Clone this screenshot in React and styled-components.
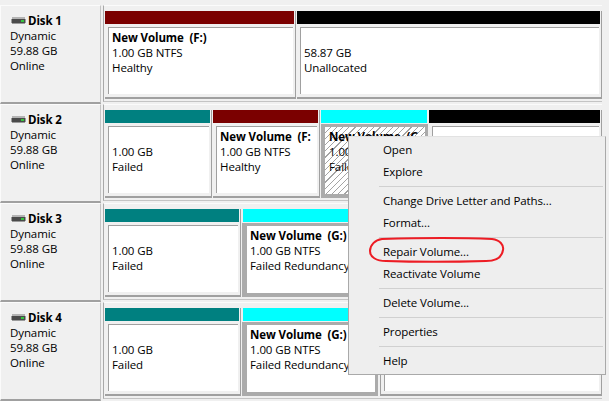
import React from 'react';
import styled, { createGlobalStyle, css } from 'styled-components';

const GlobalStyle = createGlobalStyle`
  html, body {
    margin: 0;
    padding: 0;
    width: 609px;
    height: 401px;
    overflow: hidden;
    background: #f0f0f0;
  }
`;

const Page = styled.div`
  position: relative;
  width: 609px;
  height: 401px;
  padding-top: 5px;
  box-sizing: border-box;
  background: #f0f0f0;
  font-family: 'Open Sans', 'Noto Sans', sans-serif;
  font-size: 11.5px;
  letter-spacing: -0.1px;
  line-height: 15px;
  color: #000;
  overflow: hidden;
`;

const Row = styled.div`
  display: flex;
  height: 99px;
`;

const DiskLabel = styled.div`
  box-sizing: border-box;
  flex: none;
  width: 101px;
  height: 99px;
  margin-right: 2px;
  padding: 7px 0 0 9px;
  border-top: 1px solid #fbfbfb;
  border-left: 1px solid #fbfbfb;
  border-right: 1px solid #c4c4c4;
  border-bottom: 2px solid #a0a0a0;
`;

const DiskTitle = styled.div`
  display: flex;
  align-items: center;
  gap: 2px;
  font-weight: 700;
  margin-left: 1px;
`;

const Track = styled.div`
  flex: none;
  box-sizing: border-box;
  display: flex;
  gap: 1px;
  width: 499px;
  height: 97px;
  padding: 5px 0 0 1px;
  border-top: 1px solid #fbfbfb;
  border-left: 1px solid #a8a8a8;
  border-bottom: 1px solid #c4c4c4;
`;

const Cell = styled.div`
  box-sizing: border-box;
  display: flex;
  flex-direction: column;
  flex: ${(p) => (p.$grow ? '1 1 0' : 'none')};
  width: ${(p) => (p.$width ? `${p.$width}px` : 'auto')};
  height: 88px;
  ${(p) =>
    !p.$selected &&
    css`
      border-right: 1px solid #a0a0a0;
      border-bottom: 2px solid #a0a0a0;
    `}
  ${(p) =>
    p.$framed &&
    css`
      margin-left: 1px;
      border-left: 1px solid #a0a0a0;
    `}
`;

const Bar = styled.div`
  flex: none;
  height: 13px;
  margin-left: ${(p) => p.$lead}px;
  margin-right: 1px;
  background: ${(p) => p.$color};
`;

const Body = styled.div`
  flex: 1;
  min-height: 0;
  display: flex;
  ${(p) =>
    p.$selected
      ? css`
          margin-top: 1px;
          padding: 3px 3px 4px ${4 + p.$lead}px;
          background: #ababab;
        `
      : css`
          padding: 3px 2px 3px 3px;
        `}
`;

const Box = styled.div`
  flex: 1;
  min-width: 0;
  box-sizing: border-box;
  padding: 2px 0 0 ${(p) => (p.$hatch ? 4 : 3)}px;
  white-space: pre;
  overflow: hidden;
  background: ${(p) =>
    p.$hatch
      ? 'repeating-linear-gradient(135deg, #fff 0, #fff 3.6px, #a4a4a4 3.6px, #a4a4a4 4.4px)'
      : '#fff'};
  ${(p) =>
    !p.$plain &&
    css`
      border-top: 1px solid #a0a0a0;
      border-left: 1px solid #a0a0a0;
    `}
`;

const BoxText = styled.div`
  min-height: 15px;
  font-weight: ${(p) => (p.$bold ? 700 : 400)};
`;

const Menu = styled.div`
  position: absolute;
  left: 348px;
  top: 136px;
  box-sizing: border-box;
  width: 258px;
  height: 239px;
  padding: 2px 2px 4px;
  background: #eeeeee;
  border: 1px solid #a9a9a9;
  border-top-color: #e2e2e2;
`;

const MenuItem = styled.div`
  height: 22px;
  padding-left: 32px;
  line-height: 22px;
`;

const MenuRule = styled.div`
  height: 1px;
  margin: 3px 0 3px 28px;
  background: #d0d0d0;
`;

const Oval = styled.svg`
  position: absolute;
  left: 368px;
  top: 237px;
`;

const DiskIcon = () => (
  <svg width="15" height="8" viewBox="0 0 15 8">
    <rect x="1" y="0" width="13" height="2" fill="#b4b4b4" />
    <rect x="0.5" y="2" width="14" height="4" fill="#4a4a4a" />
    <rect x="10" y="3" width="3" height="2" fill="#35c53f" />
    <rect x="1" y="6" width="13" height="1" fill="#9a9a9a" />
  </svg>
);

const Volume = ({ color, width, grow, selected, hatch, framed, lead = 0, lines = [] }) => (
  <Cell $width={width} $grow={grow} $selected={selected} $framed={framed}>
    <Bar $color={color} $lead={lead} />
    <Body $selected={selected} $lead={lead}>
      <Box $hatch={hatch} $plain={selected}>
        {lines.map((line, i) => (
          <BoxText key={i} $bold={i === 0}>
            {line}
          </BoxText>
        ))}
      </Box>
    </Body>
  </Cell>
);

const MAROON = '#7b0000';
const TEAL = '#008080';
const CYAN = '#00ffff';
const BLACK = '#000000';

const failed = ['', '1.00 GB', 'Failed'];
const redundancy = ['New Volume  (G:)', '1.00 GB NTFS', 'Failed Redundancy'];

const disks = [
  {
    name: 'Disk 1',
    volumes: [
      { color: MAROON, width: 191, lines: ['New Volume  (F:)', '1.00 GB NTFS', 'Healthy'] },
      { color: BLACK, grow: true, lines: ['', '58.87 GB', 'Unallocated'] },
    ],
  },
  {
    name: 'Disk 2',
    volumes: [
      { color: TEAL, width: 107, lines: failed },
      { color: MAROON, width: 107, lines: ['New Volume  (F:', '1.00 GB NTFS', 'Healthy'] },
      {
        color: CYAN,
        width: 107,
        selected: true,
        hatch: true,
        lines: ['New Volume  (G', '1.00 GB NTFS', 'Failed Redundancy'],
      },
      { color: BLACK, grow: true },
    ],
  },
  {
    name: 'Disk 3',
    volumes: [
      { color: TEAL, width: 136, lines: failed },
      { color: CYAN, width: 136, lead: 1, selected: true, lines: redundancy },
      { color: BLACK, grow: true, framed: true },
    ],
  },
  {
    name: 'Disk 4',
    volumes: [
      { color: TEAL, width: 136, lines: failed },
      { color: CYAN, width: 136, lead: 1, selected: true, lines: redundancy },
      { color: BLACK, grow: true, framed: true },
    ],
  },
];

const menu = [
  ['Open', 'Explore'],
  ['Change Drive Letter and Paths...', 'Format...'],
  ['Repair Volume...', 'Reactivate Volume'],
  ['Delete Volume...'],
  ['Properties'],
  ['Help'],
];

export default function App() {
  return (
    <Page>
      <GlobalStyle />
      {disks.map((disk) => (
        <Row key={disk.name}>
          <DiskLabel>
            <DiskTitle>
              <DiskIcon />
              {disk.name}
            </DiskTitle>
            <div>Dynamic</div>
            <div>59.88 GB</div>
            <div>Online</div>
          </DiskLabel>
          <Track>
            {disk.volumes.map((v, i) => (
              <Volume key={i} {...v} />
            ))}
          </Track>
        </Row>
      ))}
      <Menu>
        {menu.map((group, i) => (
          <React.Fragment key={i}>
            {i > 0 && <MenuRule />}
            {group.map((label) => (
              <MenuItem key={label}>{label}</MenuItem>
            ))}
          </React.Fragment>
        ))}
      </Menu>
      <Oval width="138" height="26" viewBox="0 0 138 26">
        <path
          d="M14 2 C50 1 100 1 124 2 C132 3 136 8 135 13 C134 20 128 24 118 24 C85 25 45 25 18 24 C8 24 2 20 2 14 C2 8 7 3 14 2 Z"
          fill="none"
          stroke="#ed1c24"
          strokeWidth="2"
        />
      </Oval>
    </Page>
  );
}
